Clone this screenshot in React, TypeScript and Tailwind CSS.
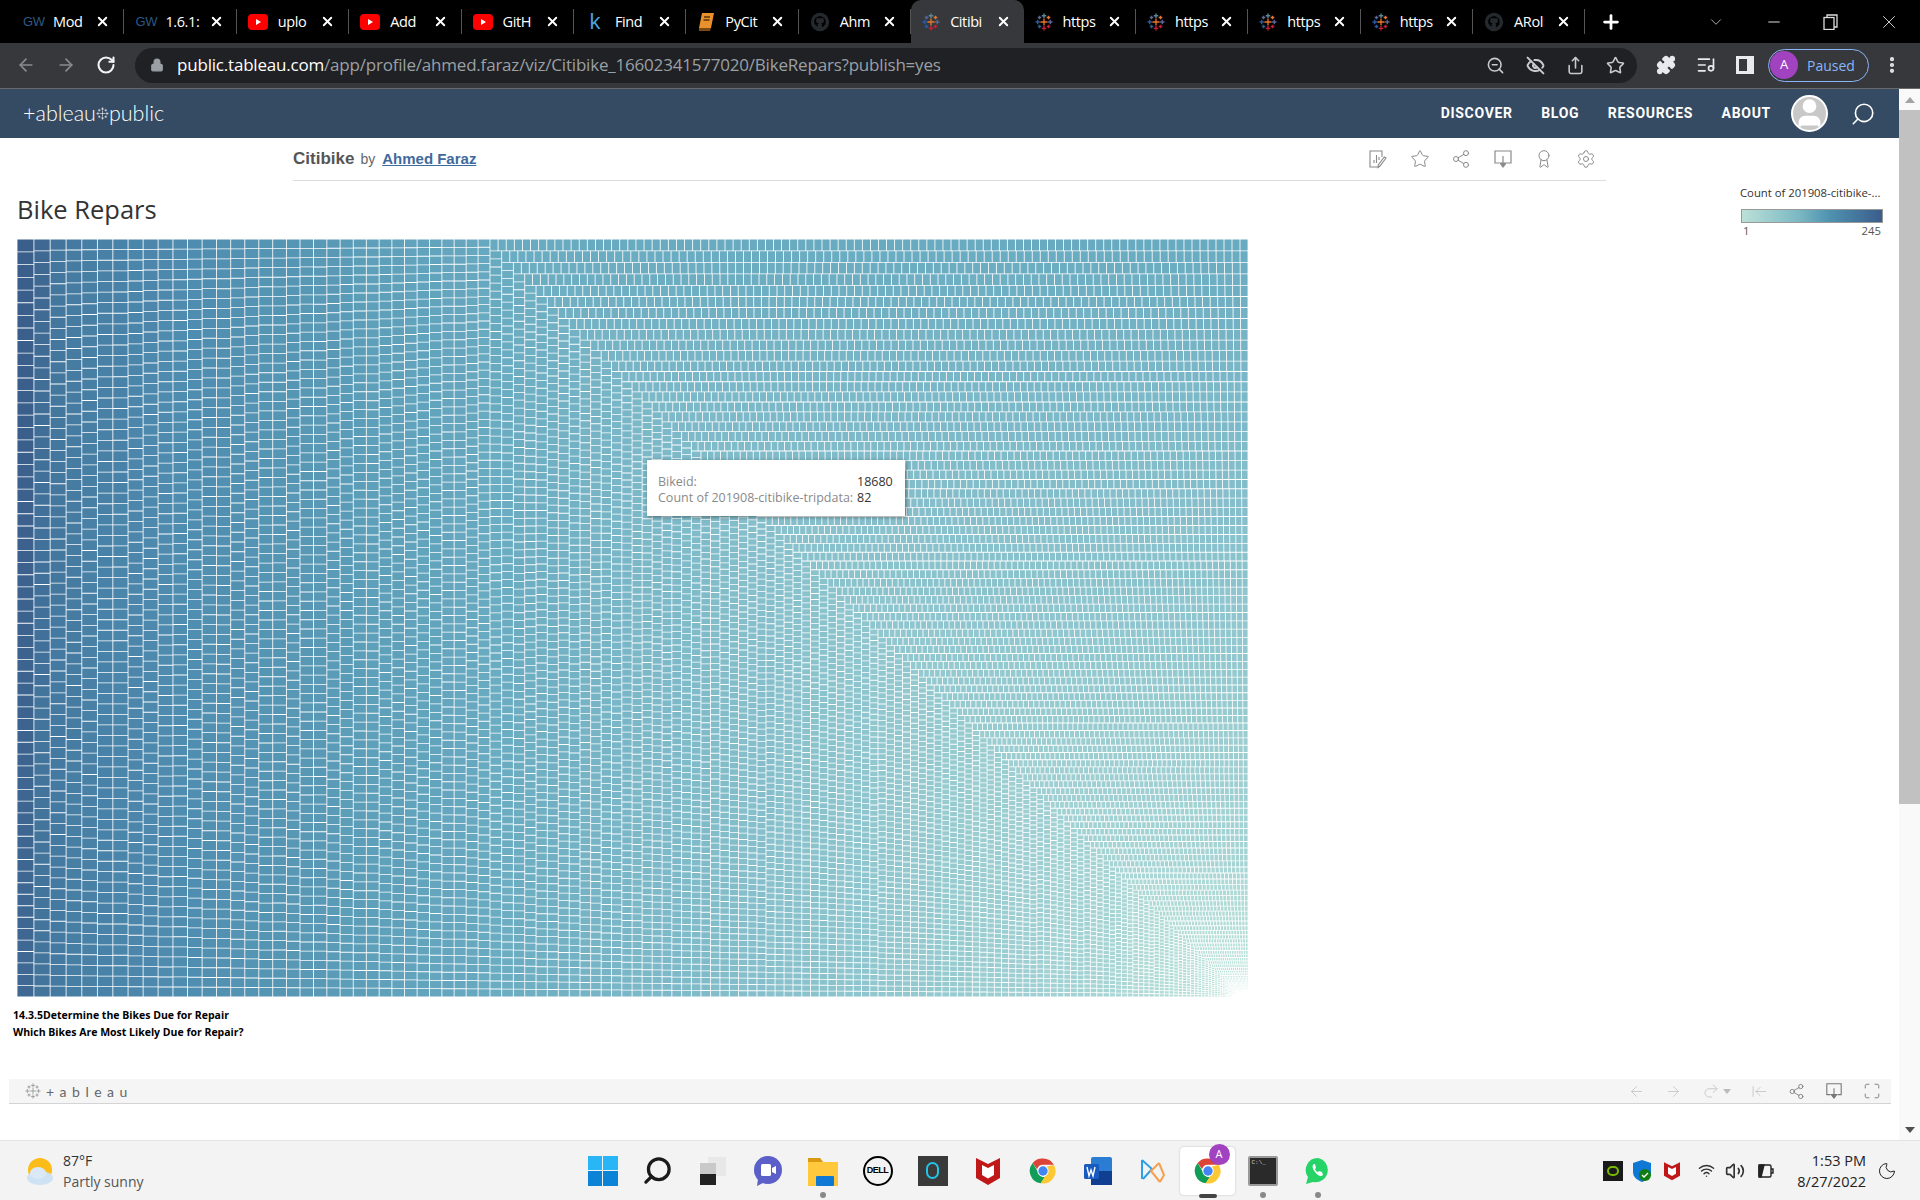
import { useMemo } from 'react'
import {
  ArrowLeft, ArrowRight, RotateCw, Lock, ZoomOut, EyeOff, Share, Star, Puzzle, ListMusic, MoreVertical,
  Search, ChevronDown, Minus, X, Plus, Share2, Settings, Award, Redo2, ArrowLeftToLine, Maximize, User,
  Wifi, Volume2, Moon,
} from 'lucide-react'

const W = 1231
const H = 758

// area of a cell (px²) against the share of the chart already filled
const areaCurve: [number, number][] = [
  [0, 208], [0.013, 196], [0.02, 176], [0.1, 155], [0.22, 128], [0.38, 96], [0.6, 70], [0.8, 52],
  [0.9, 41], [0.978, 28], [0.994, 15], [0.999, 6], [1, 1],
]

const colorStops: [number, number[]][] = [
  [0, [188, 228, 216]], [22, [172, 216, 214]], [40, [150, 202, 208]], [65, [126, 186, 201]], [96, [104, 170, 192]],
  [120, [90, 155, 183]], [150, [78, 139, 175]], [175, [68, 121, 160]], [190, [63, 106, 148]], [210, [59, 95, 139]],
]

function lerpTable(x: number, table: [number, number][]) {
  for (let i = 1; i < table.length; i++) {
    if (x <= table[i][0]) {
      const [x0, y0] = table[i - 1]
      const [x1, y1] = table[i]
      return y0 + ((y1 - y0) * (x - x0)) / (x1 - x0)
    }
  }
  return table[table.length - 1][1]
}

function colorFor(a: number) {
  for (let i = 1; i < colorStops.length; i++) {
    if (a <= colorStops[i][0]) {
      const [a0, c0] = colorStops[i - 1]
      const [a1, c1] = colorStops[i]
      const k = (a - a0) / (a1 - a0)
      const c = c0.map((v, n) => Math.round(v + (c1[n] - v) * k))
      return `rgb(${c.join(',')})`
    }
  }
  return 'rgb(59,95,139)'
}

function buildTreemap() {
  const total = W * H
  const cells: number[] = []
  let filled = 0
  let seed = 7
  while (filled < total) {
    const base = lerpTable(filled / total, areaCurve)
    seed = (seed * 16807) % 2147483647
    const a = Math.max(0.8, base * (0.93 + ((seed % 1000) / 1000) * 0.14))
    cells.push(a)
    filled += a
  }
  cells.sort((p, q) => q - p)
  const scale = total / filled

  const buckets = new Map<string, string[]>()
  const put = (x: number, y: number, w: number, h: number, a: number) => {
    const key = colorFor(Math.round(a / 3) * 3)
    const inset = 0.42
    const cw = w - inset * 2
    const ch = h - inset * 2
    if (cw <= 0 || ch <= 0) return
    if (!buckets.has(key)) buckets.set(key, [])
    buckets.get(key)!.push(`M${(x + inset).toFixed(2)} ${(y + inset).toFixed(2)}h${cw.toFixed(2)}v${ch.toFixed(2)}h${(-cw).toFixed(2)}z`)
  }

  let x = 0
  let y = 0
  let w = W
  let h = H
  let i = 0
  while (i < cells.length && w > 0 && h > 0) {
    const vertical = w > h + 6
    const len = vertical ? h : w
    let sum = 0
    let j = i
    while (j < cells.length) {
      const a = cells[j] * scale
      sum += a
      j++
      const t = sum / len
      if ((t * t) / a >= 1.45) break
    }
    const t = sum / len
    let pos = 0
    for (let k = i; k < j; k++) {
      const a = cells[k] * scale
      const l = a / t
      if (vertical) put(x, y + pos, t, l, cells[k])
      else put(x + pos, y, l, t, cells[k])
      pos += l
    }
    if (vertical) {
      x += t
      w -= t
    } else {
      y += t
      h -= t
    }
    i = j
  }
  return Array.from(buckets.entries())
}

function Treemap() {
  const paths = useMemo(buildTreemap, [])
  return (
    <svg width={W} height={H} viewBox={`0 0 ${W} ${H}`} className="block">
      {paths.map(([fill, parts]) => (
        <path key={fill} fill={fill} d={parts.join('')} />
      ))}
    </svg>
  )
}

function TableauMark({ size = 18, mono }: { size?: number; mono?: string }) {
  const c = mono ? [mono, mono, mono, mono, mono] : ['#e8762d', '#c72035', '#5b879b', '#2a5a9e', '#5c6692']
  const cross = (cx: number, cy: number, r: number, col: string) => (
    <path d={`M${cx - r} ${cy}h${r * 2}M${cx} ${cy - r}v${r * 2}`} stroke={col} strokeWidth={mono ? 0.9 : 1.5} fill="none" />
  )
  return (
    <svg width={size} height={size} viewBox="0 0 20 20" className="shrink-0">
      {cross(10, 10, 4, c[0])}
      {cross(10, 3, 2.5, c[2])}
      {cross(10, 17, 2.5, c[1])}
      {cross(3, 10, 2.5, c[3])}
      {cross(17, 10, 2.5, c[4])}
      {cross(5, 5, 2, c[4])}
      {cross(15, 5, 2, c[0])}
      {cross(5, 15, 2, c[3])}
      {cross(15, 15, 2, c[1])}
    </svg>
  )
}

function GithubMark() {
  return (
    <svg width="20" height="20" viewBox="0 0 24 24" className="shrink-0">
      <circle cx="12" cy="12" r="11" fill="#24292e" />
      <path d="M12 5c-4 0-7 2.800-7 6.500 0 2.800 1.800 5 4.500 6v-2.500c-1.500.3-2-.5-2.300-1.200 1.300.4 1.600 1 2.500 1 .2-.6.5-1 .8-1.200-2-.3-3.300-1.200-3.300-3 0-.8.3-1.400.8-2-.1-.5-.1-1.200.2-1.800.8 0 1.400.4 1.900.8.9-.2 2.900-.2 3.800 0 .5-.4 1.100-.8 1.900-.8.3.6.3 1.300.2 1.800.5.6.8 1.200.8 2 0 1.800-1.300 2.700-3.300 3 .4.400.8 1 .8 1.800v3c2.700-1 4.500-3.200 4.500-6C19 7.800 16 5 12 5z" fill="#000" />
    </svg>
  )
}

function YoutubeMark() {
  return (
    <svg width="20" height="16" viewBox="0 0 20 16" className="shrink-0">
      <rect width="20" height="16" rx="4" fill="#f00" />
      <path d="M8 5l5 3-5 3z" fill="#fff" />
    </svg>
  )
}

function BookMark() {
  return (
    <svg width="18" height="20" viewBox="0 0 18 20" className="shrink-0">
      <path d="M5 1h12l-3 15H2z" fill="#e8912d" />
      <path d="M2 16h12l-1 3H2z" fill="#7a4a12" />
      <path d="M7 5h6M6.500 8h6" stroke="#5a3508" strokeWidth="1.400" />
    </svg>
  )
}

const GwMark = () => <span className="w-5 shrink-0 text-[13px] font-['Liberation_Sans'] text-[#2c5985] tracking-tight">GW</span>

const tabs = [
  { icon: <GwMark />, label: 'Mod' },
  { icon: <GwMark />, label: '1.6.1:' },
  { icon: <YoutubeMark />, label: 'uplo' },
  { icon: <YoutubeMark />, label: 'Add' },
  { icon: <YoutubeMark />, label: 'GitH' },
  { icon: <span className="w-5 shrink-0 text-center text-[22px] leading-none font-['Liberation_Sans'] text-[#4a9fd8]">k</span>, label: 'Find' },
  { icon: <BookMark />, label: 'PyCit' },
  { icon: <GithubMark />, label: 'Ahm' },
  { icon: <TableauMark />, label: 'Citibi', active: true },
  { icon: <TableauMark />, label: 'https' },
  { icon: <TableauMark />, label: 'https' },
  { icon: <TableauMark />, label: 'https' },
  { icon: <TableauMark />, label: 'https' },
  { icon: <GithubMark />, label: 'ARol' },
]

function TabStrip() {
  return (
    <div className="flex h-[43px] shrink-0 items-stretch bg-black pl-[12px] font-['Open_Sans',sans-serif] text-white">
      {tabs.map((t, i) => (
        <div
          key={i}
          className={`flex w-[112.400px] shrink-0 items-center gap-[10px] pl-[11px] pr-[13px] ${t.active ? 'rounded-t-[10px] bg-[#36383b]' : 'my-[9px] border-r border-[#555]'}`}
        >
          {t.icon}
          <span className="flex-1 whitespace-nowrap text-[14.500px] tracking-[-0.4px]">{t.label}</span>
          <X size={15} strokeWidth={3} className="shrink-0" />
        </div>
      ))}
      <div className="ml-[15px] flex items-center">
        <Plus size={22} strokeWidth={3} />
      </div>
      <div className="ml-auto flex items-center gap-[40px] pr-[20px] text-[#ddd]">
        <ChevronDown size={18} strokeWidth={1} />
        <Minus size={18} strokeWidth={1.5} />
        <svg width="15" height="16" viewBox="0 0 15 16" fill="none" stroke="currentColor" strokeWidth="1.300">
          <rect x="1" y="3.500" width="10" height="12" />
          <path d="M4 3.500V1h10v12h-3" />
        </svg>
        <X size={22} strokeWidth={1} />
      </div>
    </div>
  )
}

function Toolbar() {
  return (
    <div className="flex h-[46px] shrink-0 items-center border-b border-[#6a6a6a] bg-[#36383b] pb-[1px] font-['Open_Sans',sans-serif]">
      <div className="flex w-[135px] shrink-0 items-center gap-[20px] pl-[16px]">
        <ArrowLeft size={20} className="text-[#8a8b8e]" />
        <ArrowRight size={20} className="text-[#8a8b8e]" />
        <RotateCw size={20} strokeWidth={2.5} className="text-[#f1f3f4]" />
      </div>
      <div className="flex h-[35px] w-[1502px] shrink-0 items-center rounded-full bg-[#202124] pl-[15px] pr-[12px]">
        <Lock size={14} fill="#9aa0a6" className="mr-[13px] text-[#9aa0a6]" />
        <span className="text-[17px] tracking-[-0.2px] whitespace-nowrap text-[#9aa0a6]">
          <span className="text-white">public.tableau.com</span>/app/profile/ahmed.faraz/viz/Citibike_16602341577020/BikeRepars?publish=yes
        </span>
        <div className="ml-auto flex items-center gap-[21px] text-[#c8cacc]">
          <ZoomOut size={19} />
          <EyeOff size={19} strokeWidth={2.5} />
          <Share size={19} />
          <Star size={19} />
        </div>
      </div>
      <div className="ml-[19px] flex items-center gap-[20px] text-[#e8eaed]">
        <Puzzle size={20} fill="#e8eaed" />
        <ListMusic size={20} />
        <div className="h-[18px] w-[18px] border-[3px] border-r-[7px] border-[#e8eaed]" />
      </div>
      <div className="ml-[14px] flex h-[33px] w-[101px] items-center gap-[9px] rounded-full border border-[#8ab4f8] pl-[1px] text-[14px] text-[#8ab4f8]">
        <span className="flex h-[28px] w-[28px] items-center justify-center rounded-full bg-[#a142c0] text-[13px] text-white">A</span>
        Paused
      </div>
      <MoreVertical size={20} strokeWidth={3} className="ml-[13px] text-[#e8eaed]" />
    </div>
  )
}

function SiteHeader() {
  return (
    <div className="flex h-[49px] shrink-0 items-center bg-[#354b63] pl-[23px] pr-[23px] text-white">
      <div className="flex items-center font-['Lato',sans-serif] text-[21.500px] font-light leading-none">
        <span>+ableau</span>
        <TableauMark size={13} mono="#ffffff" />
        <span>public</span>
      </div>
      <nav className="ml-auto flex items-center gap-[28.500px] font-['Roboto',sans-serif] text-[14px] font-bold tracking-[0.7px]">
        <span>DISCOVER</span>
        <span>BLOG</span>
        <span>RESOURCES</span>
        <span>ABOUT</span>
      </nav>
      <div className="ml-[20px] flex h-[37px] w-[37px] items-end justify-center overflow-hidden rounded-full border-2 border-white bg-[#c8c8c8]">
        <User size={34} fill="#fff" className="text-white" />
      </div>
      <Search size={26} strokeWidth={1.5} className="ml-[22px] -scale-x-100" />
    </div>
  )
}

function TitleBar() {
  const cls = 'text-[#8a8a8a]'
  return (
    <div className="ml-[293px] flex h-[43px] w-[1313px] shrink-0 items-center border-b border-[#dcdcdc] font-['Liberation_Sans',sans-serif]">
      <span className="text-[17px] font-bold text-[#555]">Citibike</span>
      <span className="ml-[6px] text-[14px] text-[#666]">by</span>
      <span className="ml-[7px] text-[15px] font-bold text-[#3f6a9c] underline">Ahmed Faraz</span>
      <div className="ml-auto flex items-center gap-[21.600px] pr-[10px]">
        <svg width="20" height="20" viewBox="0 0 20 20" fill="none" stroke="#8a8a8a" strokeWidth="1.100">
          <path d="M14 8V2H2v16h8" />
          <path d="M6 14v-3M8.500 14V6M11 11V8" />
          <path d="M18 9l-6 8-2 1.500.3-2.500 6-8z" />
        </svg>
        <Star size={20} strokeWidth={1.2} className={cls} />
        <Share2 size={20} strokeWidth={1.2} className={cls} />
        <svg width="20" height="20" viewBox="0 0 20 20" fill="none" stroke="#8a8a8a" strokeWidth="1.200">
          <path d="M6 14H2V2h16v12h-4" />
          <path d="M10 7v9" />
          <path d="M7 14l3 4 3-4z" fill="#8a8a8a" />
        </svg>
        <Award size={20} strokeWidth={1.2} className={cls} />
        <Settings size={20} strokeWidth={1.2} className={cls} />
      </div>
    </div>
  )
}

function Viz() {
  return (
    <div className="flex flex-1 flex-col">
      <div className="flex h-[58px] shrink-0">
        <h1 className="pl-[17px] pt-[11px] font-['Open_Sans',sans-serif] text-[25.500px] leading-[34px] text-[#333]">Bike Repars</h1>
        <div className="ml-auto mr-[16px] mt-[4px] w-[142px] font-['Open_Sans',sans-serif] text-[11.300px] text-[#333]">
          <div className="h-[16px] -ml-[1px] whitespace-nowrap leading-[16px]">Count of 201908-citibike-...</div>
          <div className="mt-[8px] h-[14px] border border-[#999] bg-[linear-gradient(to_right,#bce0d8,#7cb9c4_40%,#4f93b0_62%,#3a5d8c)]" />
          <div className="flex justify-between px-[2px] text-[#555]">
            <span>1</span>
            <span>245</span>
          </div>
        </div>
      </div>
      <div className="relative ml-[17px] w-[1231px]">
        <Treemap />
        <div className="absolute left-[630px] top-[221px] h-[56px] w-[258px] bg-white px-[11px] pt-[14px] font-['Open_Sans',sans-serif] text-[12.500px] leading-[16px] text-[#333] shadow-[1px_1px_4px_rgba(0,0,0,0.45)]">
          <div className="flex">
            <span className="w-[199px] text-[#8a8a8a]">Bikeid:</span>
            <span>18680</span>
          </div>
          <div className="flex">
            <span className="w-[199px] whitespace-nowrap text-[#8a8a8a]">Count of 201908-citibike-tripdata:</span>
            <span>82</span>
          </div>
        </div>
      </div>
      <div className="ml-[13px] mt-[10px] font-['Open_Sans',sans-serif] text-[10.500px] font-bold leading-[17px] text-black">
        <div>14.3.5Determine the Bikes Due for Repair</div>
        <div>Which Bikes Are Most Likely Due for Repair?</div>
      </div>
      <div className="mb-[36px] ml-[9px] mr-[8px] mt-auto flex h-[25px] items-center border-b border-[#d4d4d4] bg-[#f5f5f5] pl-[16px] pr-[10px] text-[#aaa]">
        <TableauMark size={16} mono="#8a8a8a" />
        <span className="ml-[5px] font-['Lato',sans-serif] text-[14px] tracking-[5.500px] text-[#666]">+ableau</span>
        <div className="ml-auto flex items-center gap-[20px]">
          <ArrowLeft size={17} strokeWidth={1.2} className="text-[#c4c4c4]" />
          <ArrowRight size={17} strokeWidth={1.2} className="text-[#c4c4c4]" />
          <div className="flex items-center gap-[3px]">
            <Redo2 size={18} strokeWidth={1.2} className="text-[#c4c4c4]" />
            <span className="h-0 w-0 border-x-[4px] border-t-[5px] border-x-transparent border-t-[#bbb]" />
          </div>
          <ArrowLeftToLine size={17} strokeWidth={1.2} className="text-[#c4c4c4]" />
          <Share2 size={17} strokeWidth={1.2} className="text-[#777]" />
          <svg width="18" height="18" viewBox="0 0 20 20" fill="none" stroke="#777" strokeWidth="1.200">
            <path d="M6 14H2V2h16v12h-4" />
            <path d="M10 7v9" />
            <path d="M7 14l3 4 3-4z" fill="#777" />
          </svg>
          <Maximize size={18} strokeWidth={1.2} className="text-[#777]" />
        </div>
      </div>
    </div>
  )
}

function Scrollbar() {
  return (
    <div className="flex w-[21px] shrink-0 flex-col items-center bg-[#f9f9f9]">
      <div className="flex h-[21px] shrink-0 items-center">
        <span className="h-0 w-0 border-x-[5px] border-b-[6px] border-x-transparent border-b-[#a3a3a3]" />
      </div>
      <div className="h-[694px] w-full bg-[#c1c1c1]" />
      <div className="mt-auto flex h-[21px] shrink-0 items-center">
        <span className="h-0 w-0 border-x-[5px] border-t-[6px] border-x-transparent border-t-[#505050]" />
      </div>
    </div>
  )
}

function TaskIcon({ children, dot, active }: { children: React.ReactNode; dot?: boolean; active?: boolean }) {
  return (
    <div className={`relative flex h-[48px] w-[55px] items-center justify-center ${active ? 'rounded-[4px] bg-white shadow-[0_0_2px_rgba(0,0,0,0.25)]' : ''}`}>
      {children}
      {dot && <span className="absolute bottom-[-3px] left-1/2 h-[6px] w-[6px] -translate-x-1/2 rounded-full bg-[#888]" />}
      {active && <span className="absolute -bottom-[3px] left-1/2 h-[4px] w-[18px] -translate-x-1/2 rounded-full bg-[#444]" />}
    </div>
  )
}

function ChromeLogo({ size = 30 }: { size?: number }) {
  return (
    <svg width={size} height={size} viewBox="0 0 48 48">
      <path d="M24 4a20 20 0 0 1 17.300 10H24a10 10 0 0 0-9.500 7L7.500 11A20 20 0 0 1 24 4z" fill="#db4437" />
      <path d="M7.500 11l8.700 15a10 10 0 0 0 11 7.500L20.500 43.700A20 20 0 0 1 7.500 11z" fill="#0f9d58" />
      <path d="M41.300 14A20 20 0 0 1 20.500 43.700L29 29a10 10 0 0 0 0-12z" fill="#fcc934" />
      <circle cx="24" cy="24" r="9" fill="#fff" />
      <circle cx="24" cy="24" r="7.500" fill="#4285f4" />
    </svg>
  )
}

function McAfee({ size = 30 }: { size?: number }) {
  return (
    <svg width={size} height={size} viewBox="0 0 30 30">
      <path d="M3 2l12 6 12-6v20l-12 7-12-7z" fill="#c01818" />
      <path d="M9 9l6 3 6-3v10l-6 3.500-6-3.500z" fill="#fff" />
    </svg>
  )
}

function Taskbar() {
  return (
    <div className="relative flex h-[60px] shrink-0 items-center border-t border-[#e4e4e4] bg-[#f3f3f3] font-['Open_Sans',sans-serif] text-[#333]">
      <div className="flex w-[575px] shrink-0 items-center pl-[25px]">
        <svg width="30" height="32" viewBox="0 0 30 32">
          <circle cx="15" cy="15" r="12" fill="#fbbc1a" />
          <ellipse cx="15" cy="23" rx="13" ry="7" fill="#cfe2f3" />
          <ellipse cx="13" cy="18" rx="8" ry="6" fill="#dbe9f6" />
        </svg>
        <div className="ml-[8px] text-[14px] leading-[21px]">
          <div>87°F</div>
          <div className="text-[#555]">Partly sunny</div>
        </div>
      </div>
      <div className="flex items-center">
        <TaskIcon>
          <div className="grid h-[30px] w-[30px] grid-cols-2 gap-[1px]">
            <span className="bg-[#29b6f6]" />
            <span className="bg-[#29b6f6]" />
            <span className="bg-[#0b84d8]" />
            <span className="bg-[#0b84d8]" />
          </div>
        </TaskIcon>
        <TaskIcon>
          <Search size={31} strokeWidth={2.5} className="-scale-x-100 text-[#1a1a1a]" />
        </TaskIcon>
        <TaskIcon>
          <svg width="30" height="30" viewBox="0 0 30 30">
            <rect x="10" y="1" width="18" height="19" fill="#e8e8e8" />
            <rect x="2" y="7" width="16" height="22" fill="#c9c9c9" />
            <rect x="2" y="18" width="16" height="11" fill="#222" />
          </svg>
        </TaskIcon>
        <TaskIcon>
          <svg width="30" height="32" viewBox="0 0 30 32">
            <circle cx="15" cy="15" r="14" fill="#5b5fc7" />
            <path d="M5 24l-1 7 8-4z" fill="#5b5fc7" />
            <rect x="8" y="9" width="10" height="12" rx="1.500" fill="#fff" />
            <path d="M19 13l4-2v8l-4-2z" fill="#fff" />
          </svg>
        </TaskIcon>
        <TaskIcon dot>
          <svg width="30" height="30" viewBox="0 0 30 30">
            <path d="M0 2h12l3 4h15v24H0z" fill="#ffc83d" />
            <path d="M0 2h12l3 4H0z" fill="#d99a12" />
            <rect x="8" y="20" width="18" height="10" rx="1" fill="#0f78d4" />
          </svg>
        </TaskIcon>
        <TaskIcon>
          <div className="flex h-[30px] w-[30px] items-center justify-center rounded-full border-[2.500px] border-black font-['Liberation_Sans'] text-[9px] font-bold tracking-[-0.5px] text-black">DELL</div>
        </TaskIcon>
        <TaskIcon>
          <div className="flex h-[30px] w-[30px] items-center justify-center bg-[#3a3a3a]">
            <span className="h-[17px] w-[13px] rounded-full border-2 border-[#22c5e8]" />
          </div>
        </TaskIcon>
        <TaskIcon>
          <McAfee />
        </TaskIcon>
        <TaskIcon>
          <ChromeLogo />
        </TaskIcon>
        <TaskIcon>
          <svg width="30" height="30" viewBox="0 0 30 30">
            <rect x="8" y="1" width="21" height="28" rx="2" fill="#2b7cd3" />
            <rect x="8" y="15" width="21" height="14" fill="#103f91" />
            <rect x="1" y="8" width="15" height="15" rx="1.500" fill="#185abd" />
            <path d="M4 11l2 9 2-6 2 6 2-9" stroke="#fff" strokeWidth="1.400" fill="none" />
          </svg>
        </TaskIcon>
        <TaskIcon>
          <svg width="28" height="30" viewBox="0 0 28 30" fill="none" strokeWidth="2">
            <path d="M3 4l10 9-9 10" stroke="#2ea1e6" />
            <path d="M3 4v19" stroke="#2ea1e6" />
            <path d="M20 7L12 15l9 11" stroke="#f6a04d" />
            <path d="M20 7l5 12-4 7" stroke="#f6a04d" />
          </svg>
        </TaskIcon>
        <TaskIcon active>
          <div className="relative">
            <ChromeLogo />
            <span className="absolute -right-[7px] -top-[12px] flex h-[21px] w-[21px] items-center justify-center rounded-full bg-[#a142c0] text-[11px] text-white">A</span>
          </div>
        </TaskIcon>
        <TaskIcon dot>
          <div className="flex h-[30px] w-[30px] items-start rounded-[2px] border-2 border-[#999] bg-[#2a2a2a] p-[2px] font-['Liberation_Mono'] text-[6px] leading-none text-[#ccc]">C:\_</div>
        </TaskIcon>
        <TaskIcon dot>
          <svg width="28" height="30" viewBox="0 0 28 30">
            <path d="M14 2a12 12 0 0 0-10 19l-2 7 7-2A12 12 0 1 0 14 2z" fill="#25d366" />
            <path d="M10 8c-2 1-2 4 1 8s6 5 8 3l-1-3-3-1-1 1c-1 0-3-2-3-3l1-1-1-4z" fill="#fff" />
          </svg>
        </TaskIcon>
      </div>
      <div className="ml-auto flex items-center pr-[23px]">
        <div className="flex h-[20px] w-[20px] items-center justify-center bg-[#1a1a1a]">
          <span className="h-[10px] w-[12px] rounded-full border-2 border-[#76b900]" />
        </div>
        <svg width="20" height="22" viewBox="0 0 20 22" className="ml-[9px]">
          <path d="M10 0l9 3v9c0 5-4 8-9 10-5-2-9-5-9-10V3z" fill="#0f78d4" />
          <circle cx="13" cy="15" r="6" fill="#107c10" />
          <path d="M10 15l2 2 4-4" stroke="#fff" strokeWidth="1.400" fill="none" />
        </svg>
        <div className="ml-[10px]">
          <McAfee size={20} />
        </div>
        <Wifi size={17} className="ml-[16px] text-[#333]" />
        <Volume2 size={20} className="ml-[10px] text-[#333]" />
        <svg width="20" height="18" viewBox="0 0 20 18" className="ml-[10px]" fill="none" stroke="#222" strokeWidth="1.400">
          <rect x="4" y="3" width="12" height="12" rx="1.500" />
          <path d="M16 7h2v4h-2" />
          <path d="M4 3h5l-3 12H4z" fill="#222" />
        </svg>
        <div className="ml-[12px] w-[79px] text-right text-[14.500px] leading-[21px] text-[#222]">
          <div>1:53 PM</div>
          <div>8/27/2022</div>
        </div>
        <Moon size={20} strokeWidth={1.2} className="ml-[11px] text-[#222]" />
      </div>
    </div>
  )
}

export default function App() {
  return (
    <div className="flex h-[1200px] w-[1920px] flex-col overflow-hidden bg-white">
      <TabStrip />
      <Toolbar />
      <div className="flex min-h-0 flex-1">
        <div className="flex min-w-0 flex-1 flex-col">
          <SiteHeader />
          <TitleBar />
          <Viz />
        </div>
        <Scrollbar />
      </div>
      <Taskbar />
    </div>
  )
}
